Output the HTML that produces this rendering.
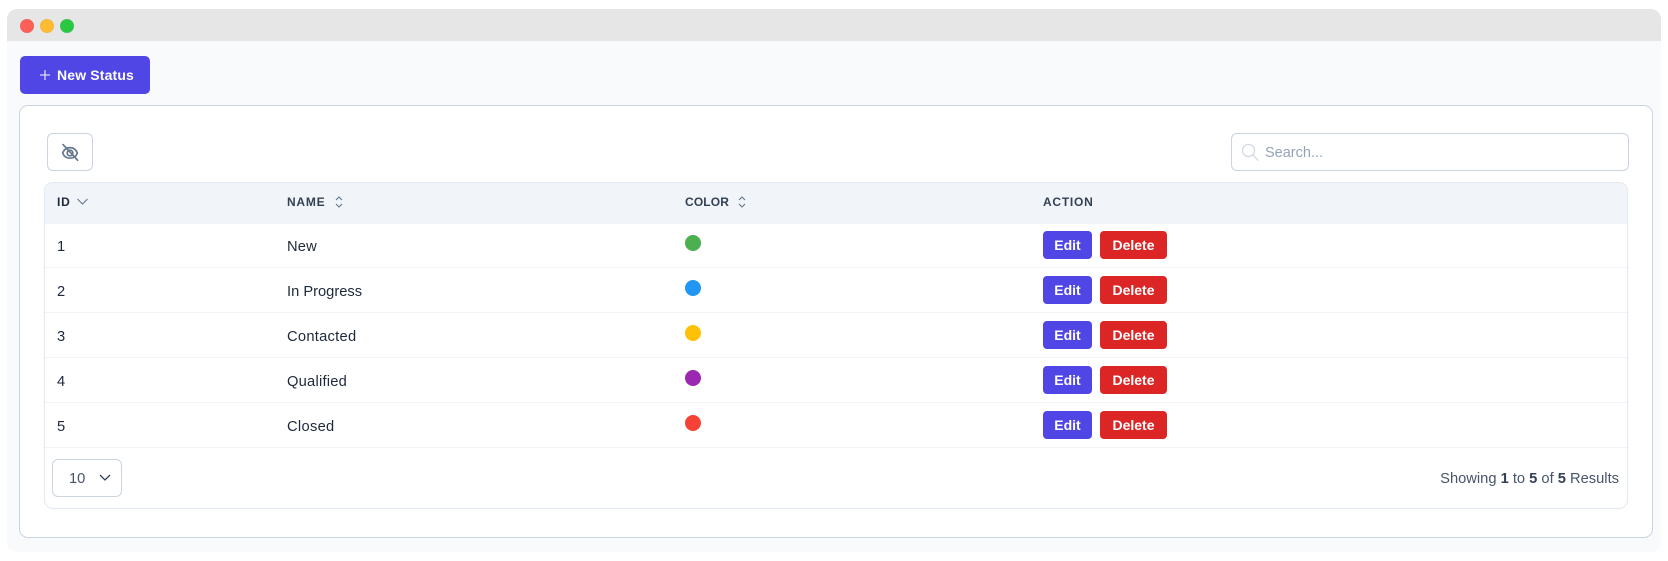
<!DOCTYPE html>
<html><head><meta charset="utf-8"><style>
html,body{margin:0;padding:0;background:#fff;}
body{width:1668px;height:561px;overflow:hidden;position:relative;font-family:"Liberation Sans",sans-serif;}
.a{position:absolute;box-sizing:border-box;white-space:nowrap;}
.t{position:absolute;white-space:nowrap;font-size:14.7px;line-height:20px;color:#1e293b;}
.h{position:absolute;white-space:nowrap;font-size:12px;line-height:16px;font-weight:700;color:#334155;letter-spacing:.75px;}
.b{position:absolute;box-sizing:border-box;height:28px;border-radius:4px;color:#fff;font-size:14px;font-weight:700;line-height:28px;text-align:center;}
.l{position:absolute;left:45px;width:1582px;height:1px;background:#f1f3f6;}
.d{position:absolute;width:16px;height:16px;border-radius:50%;left:685px;}
svg{position:absolute;fill:none;}
</style></head><body>
<div class="a" style="left:7px;top:9px;width:1654px;height:543px;background:#f8fafc;border-radius:10px;overflow:hidden;">
<div class="a" style="left:0;top:0;width:1654px;height:32px;background:#e6e6e6;"></div>
</div>
<div class="a" style="left:20px;top:19px;width:14px;height:14px;border-radius:50%;background:#ff5f57;border:1px solid #f0615a;"></div>
<div class="a" style="left:40px;top:19px;width:14px;height:14px;border-radius:50%;background:#febc2e;border:1px solid #f2b544;"></div>
<div class="a" style="left:60px;top:19px;width:14px;height:14px;border-radius:50%;background:#28c840;border:1px solid #3cc256;"></div>

<div class="a" style="left:20px;top:56px;width:130px;height:38px;background:#4f46e5;border-radius:5px;"></div>
<svg style="left:38px;top:68px" width="14" height="14" viewBox="0 0 14 14" stroke="#dcdcfa" stroke-width="1.3"><path d="M7 2v10M2 7h10"/></svg>
<div class="t" style="left:57px;top:65px;color:#fff;font-size:14px;font-weight:700;letter-spacing:.15px;">New Status</div>

<div class="a" style="left:19px;top:105px;width:1634px;height:433px;background:#fff;border:1px solid #cbd5e1;border-radius:9px;"></div>

<div class="a" style="left:47px;top:133px;width:46px;height:38px;background:#fff;border:1px solid #cbd5e1;border-radius:6px;"></div>
<svg style="left:60px;top:143px" width="20" height="20" viewBox="0 0 20 20" stroke="#64748b" stroke-width="1.7" stroke-linecap="round"><path d="M2.6 10C4 6.4 6.6 4.6 10 4.6s6 1.8 7.4 5.4C16 13.6 13.4 15.2 10 15.2S4 13.6 2.6 10Z"/><circle cx="10" cy="10" r="2.8"/><path d="M3 1.6l14.6 15.6"/></svg>

<div class="a" style="left:1231px;top:133px;width:398px;height:38px;background:#fff;border:1px solid #cbd5e1;border-radius:6px;"></div>
<svg style="left:1241px;top:142px" width="19" height="20" viewBox="0 0 19 20" stroke="#d0d9e4" stroke-width="1.3" stroke-linecap="round"><circle cx="7.5" cy="8.5" r="6"/><path d="M12 13l5 5.3"/></svg>
<div class="t" style="left:1265px;top:143px;color:#94a3b8;font-size:14.5px;">Search...</div>

<div class="a" style="left:44px;top:182px;width:1584px;height:327px;background:#fff;border:1px solid #e2e8f0;border-radius:9px;"></div>
<div class="a" style="left:45px;top:183px;width:1582px;height:41px;background:#f1f5f9;border-radius:8px 8px 0 0;"></div>

<div class="h" style="left:57px;top:194px;color:#1e293b;">ID</div>
<svg style="left:76px;top:197px" width="13" height="10" viewBox="0 0 13 10" stroke="#64748b" stroke-width="1.1"><path d="M1.5 2l5 5 5-5"/></svg>
<div class="h" style="left:287px;top:194px;">NAME</div>
<svg style="left:334px;top:195px" width="10" height="14" viewBox="0 0 10 14" stroke="#64748b" stroke-width="1.1"><path d="M2 5l3-3 3 3M2 9l3 3 3-3"/></svg>
<div class="h" style="left:685px;top:194px;letter-spacing:.15px;">COLOR</div>
<svg style="left:737px;top:195px" width="10" height="14" viewBox="0 0 10 14" stroke="#64748b" stroke-width="1.1"><path d="M2 5l3-3 3 3M2 9l3 3 3-3"/></svg>
<div class="h" style="left:1043px;top:194px;">ACTION</div>

<div class="t" style="left:57px;top:237px;">1</div><div class="t" style="left:287px;top:237px;letter-spacing:.2px;">New</div>
<div class="d" style="top:235px;background:#4caf50;"></div>
<div class="b" style="left:1043px;top:231px;width:49px;background:#4f46e5;">Edit</div><div class="b" style="left:1100px;top:231px;width:67px;background:#dc2626;">Delete</div>
<div class="l" style="top:267px;"></div>

<div class="t" style="left:57px;top:282px;">2</div><div class="t" style="left:287px;top:282px;">In Progress</div>
<div class="d" style="top:280px;background:#2196f3;"></div>
<div class="b" style="left:1043px;top:276px;width:49px;background:#4f46e5;">Edit</div><div class="b" style="left:1100px;top:276px;width:67px;background:#dc2626;">Delete</div>
<div class="l" style="top:312px;"></div>

<div class="t" style="left:57px;top:327px;">3</div><div class="t" style="left:287px;top:327px;letter-spacing:.27px;">Contacted</div>
<div class="d" style="top:325px;background:#ffc107;"></div>
<div class="b" style="left:1043px;top:321px;width:49px;background:#4f46e5;">Edit</div><div class="b" style="left:1100px;top:321px;width:67px;background:#dc2626;">Delete</div>
<div class="l" style="top:357px;"></div>

<div class="t" style="left:57px;top:372px;">4</div><div class="t" style="left:287px;top:372px;letter-spacing:.23px;">Qualified</div>
<div class="d" style="top:370px;background:#9c27b0;"></div>
<div class="b" style="left:1043px;top:366px;width:49px;background:#4f46e5;">Edit</div><div class="b" style="left:1100px;top:366px;width:67px;background:#dc2626;">Delete</div>
<div class="l" style="top:402px;"></div>

<div class="t" style="left:57px;top:417px;">5</div><div class="t" style="left:287px;top:417px;letter-spacing:.3px;">Closed</div>
<div class="d" style="top:415px;background:#f44336;"></div>
<div class="b" style="left:1043px;top:411px;width:49px;background:#4f46e5;">Edit</div><div class="b" style="left:1100px;top:411px;width:67px;background:#dc2626;">Delete</div>
<div class="l" style="top:447px;"></div>

<div class="a" style="left:52px;top:459px;width:70px;height:38px;background:#fff;border:1px solid #cbd5e1;border-radius:6px;"></div>
<div class="t" style="left:69px;top:469px;color:#475569;">10</div>
<svg style="left:98px;top:473px" width="14" height="10" viewBox="0 0 14 10" stroke="#334155" stroke-width="1.3"><path d="M2 2l5 5 5-5"/></svg>

<div class="t" style="right:49px;top:469px;color:#475569;">Showing <b style="color:#334155">1</b> to <b style="color:#334155">5</b> of <b style="color:#334155">5</b> Results</div>
</body></html>
